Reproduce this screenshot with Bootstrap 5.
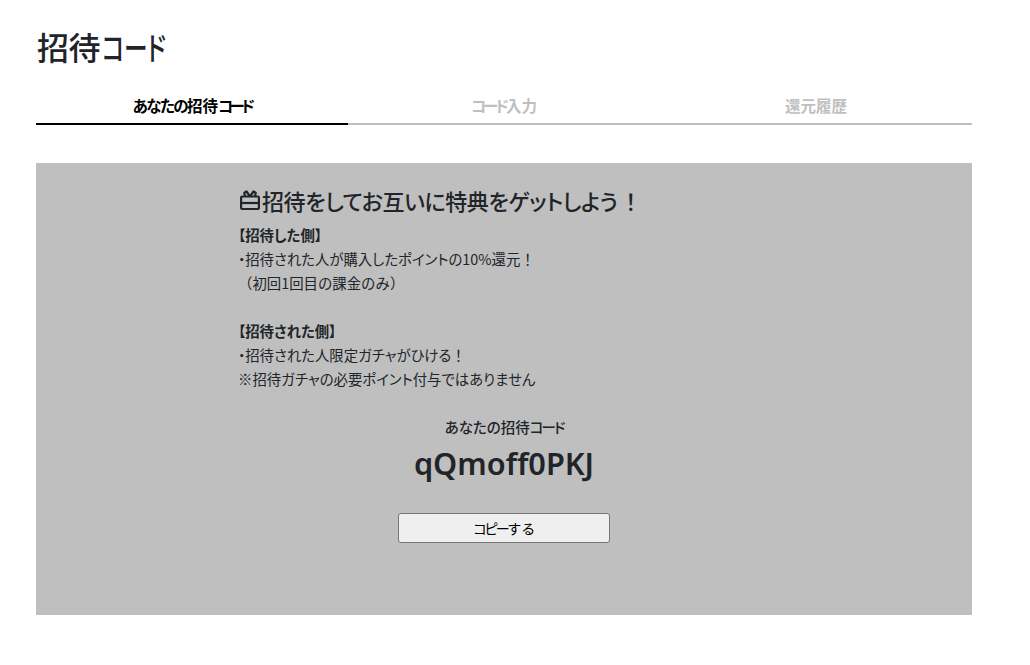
<!DOCTYPE html>
<html lang="ja">
<head>
<meta charset="utf-8">
<link href="https://cdn.jsdelivr.net/npm/bootstrap@5.3.0/dist/css/bootstrap.min.css" rel="stylesheet">
<style>
body { font-family: "Noto Sans CJK JP", "Noto Sans", sans-serif; color: #212529; background: #fff; font-feature-settings: "palt"; }
.page-wrap { padding: 24px 58px 0 36px; }
.page-title { font-size: 32px; font-weight: 500; line-height: 44px; margin: 0 0 20px 1px; letter-spacing: -.5px; }
.title-kana { display: inline-block; transform: scaleX(.74); transform-origin: left center; margin-left: 2px; }
.tab-bar { display: flex; }
.tab-item { flex: 1 1 0; text-align: center; font-size: 15.5px; font-weight: 700; line-height: 22px; padding: 6px 0 7px; border-bottom: 2px solid #bfbfbf; color: #bfbfbf; }
.tab-item.is-on { color: #000; border-bottom-color: #000; }
.kana-tight { letter-spacing: -3px; }
.tab-item.is-on .kana-tight { letter-spacing: -3.5px; }
.hira-tight { letter-spacing: -1.5px; }
.wide-punct { font-feature-settings: normal; }
.invite-panel { background: #bfbfbf; margin-top: 38px; height: 452px; padding-top: 20px; }
.invite-inner { width: 420px; margin-left: 202px; }
.invite-head { font-size: 22px; font-weight: 500; line-height: 34px; margin: 0 0 6px 2px; display: flex; align-items: center; gap: 2px; white-space: nowrap; letter-spacing: -.4px; }
.invite-copy { font-size: 14.4px; line-height: 24px; margin: 0; }
.code-area { text-align: center; margin-top: 24px; }
.code-label { font-size: 14.5px; font-weight: 500; line-height: 24px; }
.code-label .kana-tight { letter-spacing: -2px; }
.code-value { font-family: "Noto Sans", sans-serif; font-size: 30.7px; font-weight: 600; line-height: 44px; margin-top: 2px; }
.copy-btn { display: block; width: 212px; height: 30px; margin: 28px auto 0; padding: 0; font-size: 14px; line-height: 1; background: #efefef; color: #000; border: 1px solid #767676; border-radius: 3px; }
.copy-btn .kana-tight { letter-spacing: -2.5px; }
.copy-btn:hover { background: #e5e5e5; color: #000; border-color: #4f4f4f; }
</style>
</head>
<body>
<main class="page-wrap">
  <h1 class="page-title">招待<span class="title-kana">コード</span></h1>
  <div class="tab-bar">
    <div class="tab-item is-on"><span class="hira-tight">あなたの</span>招待<span class="kana-tight">コード</span></div>
    <div class="tab-item"><span class="kana-tight">コード</span>入力</div>
    <div class="tab-item">還元履歴</div>
  </div>
  <section class="invite-panel">
    <div class="invite-inner">
      <h2 class="invite-head"><svg width="20" height="21" viewBox="0 0 20 21" fill="none" stroke="#212529" stroke-width="2.2" stroke-linejoin="round" aria-hidden="true"><rect x="1.100" y="6.500" width="17.800" height="12.500" rx="1"/><path d="M1.100 13h17.800"/><path d="M10 6.500 6.500 1.500 4.300 2.800 5 6.500M10 6.500l3.500-5 2.200 1.300L15 6.500"/></svg>招待をしてお互いに特典をゲットしよう<span class="wide-punct">！</span></h2>
      <p class="invite-copy"><strong>【招待した側】</strong><br>・招待された人が購入したポイントの10%還元<span class="wide-punct">！</span><br><span class="wide-punct">（初回1回目の課金のみ）</span><br><br><strong>【招待された側】</strong><br>・招待された人限定ガチャがひける<span class="wide-punct">！</span><br>※招待ガチャの必要ポイント付与ではありません</p>
    </div>
    <div class="code-area">
      <div class="code-label">あなたの招待<span class="kana-tight">コード</span></div>
      <div class="code-value">qQmoff0PKJ</div>
      <button type="button" class="btn copy-btn"><span class="kana-tight">コピー</span>する</button>
    </div>
  </section>
</main>
<script src="https://cdn.jsdelivr.net/npm/bootstrap@5.3.0/dist/js/bootstrap.bundle.min.js"></script>
</body>
</html>
